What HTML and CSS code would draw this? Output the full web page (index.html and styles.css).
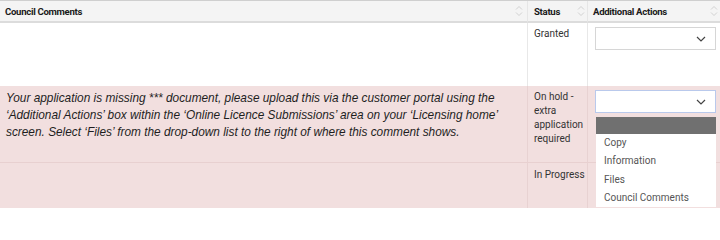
FILE: index.html
```html
<!DOCTYPE html>
<html>
<head>
<meta charset="utf-8">
<link rel="stylesheet" href="styles.css">
</head>
<body>
<div class="grid">
  <div class="th c1"><span>Council Comments</span><svg class="sort" width="8" height="12" viewBox="0 0 8 12"><path d="M1 4.5 L4 1.5 L7 4.5 M1 7.5 L4 10.5 L7 7.5" fill="none" stroke="#d2d2d2" stroke-width="1"/></svg></div>
  <div class="th c2"><span>Status</span><svg class="sort" width="8" height="12" viewBox="0 0 8 12"><path d="M1 4.5 L4 1.5 L7 4.5 M1 7.5 L4 10.5 L7 7.5" fill="none" stroke="#d2d2d2" stroke-width="1"/></svg></div>
  <div class="th c3"><span>Additional Actions</span><svg class="sort" width="8" height="12" viewBox="0 0 8 12"><path d="M1 4.5 L4 1.5 L7 4.5 M1 7.5 L4 10.5 L7 7.5" fill="none" stroke="#d2d2d2" stroke-width="1"/></svg></div>

  <div class="td c1 r1"></div>
  <div class="td c2 r1 status">Granted</div>
  <div class="td c3 r1"><div class="select"><svg width="10" height="6" viewBox="0 0 10 6"><path d="M1 1 L5 5 L9 1" fill="none" stroke="#444" stroke-width="1.2"/></svg></div></div>

  <div class="td c1 r2 pink comment">Your application is missing *** document, please upload this via the customer portal using the ‘Additional Actions’ box within the ‘Online Licence Submissions’ area on your ‘Licensing home’ screen. Select ‘Files’ from the drop-down list to the right of where this comment shows.</div>
  <div class="td c2 r2 pink status">On hold - extra application required</div>
  <div class="td c3 r2 pink anchor">
    <div class="select focus"><svg width="10" height="6" viewBox="0 0 10 6"><path d="M1 1 L5 5 L9 1" fill="none" stroke="#444" stroke-width="1.2"/></svg></div>
    <div class="menu">
      <div class="hl"></div>
      <div class="opt">Copy</div>
      <div class="opt">Information</div>
      <div class="opt">Files</div>
      <div class="opt">Council Comments</div>
    </div>
  </div>

  <div class="td c1 r3 pink"></div>
  <div class="td c2 r3 pink status nowrap">In Progress</div>
  <div class="td c3 r3 pink"></div>
</div>
</body>
</html>
```

FILE: styles.css
```css
html, body {
  margin: 0;
  padding: 0;
  background: #ffffff;
  height: 208px;
  overflow: hidden;
}
.grid {
  display: grid;
  grid-template-columns: 528px 60px 132px;
  grid-template-rows: 22px 63px 76px 47px;
  width: 720px;
  border-top: 1px solid #cfcfcf;
  font-family: Roboto, "Noto Sans", sans-serif;
}
.th {
  background: #f4f4f4;
  border-bottom: 2px solid #dcdcdc;
  box-sizing: border-box;
  display: flex;
  align-items: center;
  justify-content: space-between;
  padding: 0 4px 0 5px;
  font-size: 9.6px;
  letter-spacing: -0.3px;
  font-weight: 700;
  color: #1a1a1a;
  border-right: 1px solid #e6e6e6;
}
.th.c3 { border-right: none; padding-right: 2px; }
.th.c2 { padding-left: 6px; padding-right: 2px; }
.sort { flex: none; }
.td {
  border-right: 1px solid #e8e8e8;
  box-sizing: border-box;
}
.td.c3 { border-right: none; }
.pink {
  background: #f2dfdf;
  border-right-color: #e8d2d2;
}
.r3 { border-top: 1px solid #e8d0d0; }
.status {
  font-size: 10px;
  color: #333;
  padding: 4px 3px 0 6px;
  line-height: 14px;
}
.nowrap { white-space: nowrap; padding-right: 0; }
.r2.status { padding-top: 4px; }
.r3.status { padding-top: 5px; }
.comment {
  font-family: "Liberation Sans", Arial, sans-serif;
  font-style: italic;
  font-size: 11.85px;
  line-height: 17px;
  color: #1e1e1e;
  padding: 4px 6px 0 6px;
}
.select {
  margin: 4px 4px 0 7px;
  height: 23px;
  box-sizing: border-box;
  background: #fff;
  border: 1px solid #d6d6d6;
  display: flex;
  align-items: center;
  justify-content: flex-end;
  padding-right: 9px;
}
.select.focus {
  border-color: #b9c9ec;
  margin-top: 4px;
}
.anchor { position: relative; }
.menu {
  position: absolute;
  left: 8px;
  top: 31px;
  width: 120px;
  background: #fff;
  font-size: 10px;
  color: #555;
}
.hl {
  height: 17px;
  background: #707070;
}
.opt {
  height: 18.3px;
  line-height: 18px;
  padding-left: 8px;
}
.opt:first-of-type { margin-top: 2px; }
```
